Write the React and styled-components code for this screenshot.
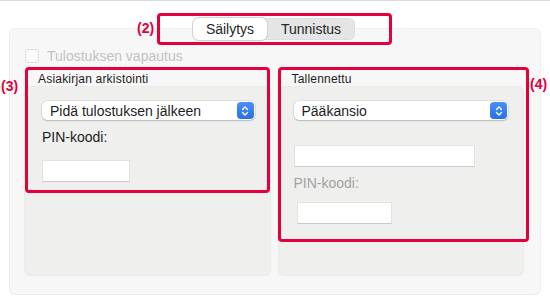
import React from "react";
import styled, { createGlobalStyle } from "styled-components";

const GlobalStyle = createGlobalStyle`
  html, body { margin: 0; padding: 0; background: #ffffff; }
  body { font-family: "Liberation Sans", Arial, sans-serif; color: #1d1d1d; }
  * { box-sizing: border-box; }
`;

const RED = "#e4003b";

const Stage = styled.div`
  position: relative;
  width: 550px;
  height: 305px;
  border-top: 1px solid #dcdcdc;
  overflow: hidden;
`;

const TabBar = styled.div`
  position: relative;
  z-index: 1;
  display: flex;
  justify-content: flex-start;
  padding: 17px 0 0 193px;
  margin-bottom: -11px;
`;

const Segmented = styled.div`
  display: flex;
  height: 22px;
  width: 162px;
  border-radius: 6px;
  background: #e5e5e5;
  box-shadow: inset 0 0 0 0.5px rgba(0, 0, 0, 0.06);
`;

const Segment = styled.div`
  flex: ${(p) => (p.$w ? `0 0 ${p.$w}px` : "1")};
  display: flex;
  align-items: center;
  justify-content: center;
  font-size: 14px;
  color: #262626;
  border-radius: 6px;
  background: ${(p) => (p.$active ? "#ffffff" : "transparent")};
  box-shadow: ${(p) =>
    p.$active ? "0 0 0 1px #d2d2d2, 0 1px 1px rgba(0,0,0,0.06)" : "none"};
`;

const Panel = styled.div`
  margin: 0 10px 0 10px;
  height: 265px;
  padding: 20px 17px 19px 15px;
  background: #f6f7f6;
  border-radius: 5px;
  box-shadow: 0 0 0 1px #eeeeee;
  display: flex;
  flex-direction: column;
`;

const CheckRow = styled.div`
  display: flex;
  align-items: center;
  height: 14px;
  gap: 8px;
`;

const Checkbox = styled.div`
  width: 14px;
  height: 14px;
  border-radius: 3px;
  border: 1px solid #dedede;
  background: #fafafa;
`;

const CheckLabel = styled.span`
  font-size: 14px;
  color: #c2c2c2;
`;

const Columns = styled.div`
  flex: 1;
  margin-top: 10px;
  display: grid;
  grid-template-columns: 1fr 1fr;
  gap: 9px;
`;

const Group = styled.div`
  display: flex;
  flex-direction: column;
`;

const GroupTitle = styled.div`
  font-size: 12px;
  letter-spacing: 0.2px;
  line-height: 13px;
  height: 13px;
  margin: 0 0 1px 13px;
  color: #1d1d1d;
`;

const GroupBox = styled.div`
  flex: 1;
  background: #efefed;
  border-radius: 5px;
  box-shadow: 0 0 0 1px #ebebea;
  padding: 14px 15px 0 ${(p) => p.$pl}px;
  display: flex;
  flex-direction: column;
  align-items: flex-start;
`;

const Select = styled.div`
  align-self: stretch;
  height: 19px;
  background: #ffffff;
  border-radius: 5px;
  box-shadow: 0 0 0 0.5px rgba(0, 0, 0, 0.12), 0 1px 1.5px rgba(0, 0, 0, 0.18);
  display: flex;
  align-items: center;
  justify-content: space-between;
  padding: 0 1px 0 8px;
  font-size: 14px;
  color: #1d1d1d;
`;

const Stepper = styled.span`
  width: 17px;
  height: 17px;
  border-radius: 4px;
  background: linear-gradient(#4a8ff8, #2a6fe6);
  display: flex;
  align-items: center;
  justify-content: center;
`;

const FieldLabel = styled.div`
  font-size: 14px;
  line-height: 17px;
  margin-top: ${(p) => p.$mt}px;
  color: ${(p) => (p.$dim ? "#a2a2a2" : "#1d1d1d")};
`;

const TextField = styled.div`
  width: ${(p) => p.$w}px;
  height: 22px;
  margin-top: ${(p) => p.$mt}px;
  margin-left: ${(p) => p.$ml || 0}px;
  background: #ffffff;
  border: 1px solid #e2e2e2;
  border-bottom-color: #c9c9c9;
`;

const Callout = styled.div`
  position: absolute;
  left: ${(p) => p.$x}px;
  top: ${(p) => p.$y}px;
  width: ${(p) => p.$w}px;
  height: ${(p) => p.$h}px;
  border: 3px solid ${RED};
  border-radius: 4px;
  pointer-events: none;
  z-index: 2;
`;

const CalloutTag = styled.span`
  position: absolute;
  left: ${(p) => p.$x}px;
  top: ${(p) => p.$y}px;
  font-size: 14px;
  font-weight: bold;
  line-height: 16px;
  color: ${RED};
  z-index: 2;
`;

const StepperIcon = () => (
  <Stepper>
    <svg width="8" height="12" viewBox="0 0 8 12" fill="none">
      <path d="M1.5 4.5 L4 2 L6.5 4.5" stroke="#fff" strokeWidth="1.4" strokeLinecap="round" strokeLinejoin="round" />
      <path d="M1.5 7.5 L4 10 L6.5 7.5" stroke="#fff" strokeWidth="1.4" strokeLinecap="round" strokeLinejoin="round" />
    </svg>
  </Stepper>
);

export default function App() {
  return (
    <>
      <GlobalStyle />
      <Stage>
        <TabBar>
          <Segmented>
            <Segment $active $w={74}>Säilytys</Segment>
            <Segment>Tunnistus</Segment>
          </Segmented>
        </TabBar>
        <Panel>
          <CheckRow>
            <Checkbox />
            <CheckLabel>Tulostuksen vapautus</CheckLabel>
          </CheckRow>
          <Columns>
            <Group>
              <GroupTitle>Asiakirjan arkistointi</GroupTitle>
              <GroupBox $pl={17}>
                <Select>
                  Pidä tulostuksen jälkeen
                  <StepperIcon />
                </Select>
                <FieldLabel $mt={9}>PIN-koodi:</FieldLabel>
                <TextField $w={88} $mt={14} />
              </GroupBox>
            </Group>
            <Group>
              <GroupTitle>Tallennettu</GroupTitle>
              <GroupBox $pl={15}>
                <Select>
                  Pääkansio
                  <StepperIcon />
                </Select>
                <TextField $w={181} $mt={25} />
                <FieldLabel $mt={8} $dim>PIN-koodi:</FieldLabel>
                <TextField $w={95} $mt={10} $ml={3} />
              </GroupBox>
            </Group>
          </Columns>
        </Panel>

        <Callout $x={157} $y={12} $w={235} $h={32} />
        <CalloutTag $x={137} $y={19}>(2)</CalloutTag>
        <Callout $x={25} $y={66} $w={245} $h={126} />
        <CalloutTag $x={1} $y={77}>(3)</CalloutTag>
        <Callout $x={278} $y={66} $w={251} $h={175} />
        <CalloutTag $x={530} $y={75}>(4)</CalloutTag>
      </Stage>
    </>
  );
}
